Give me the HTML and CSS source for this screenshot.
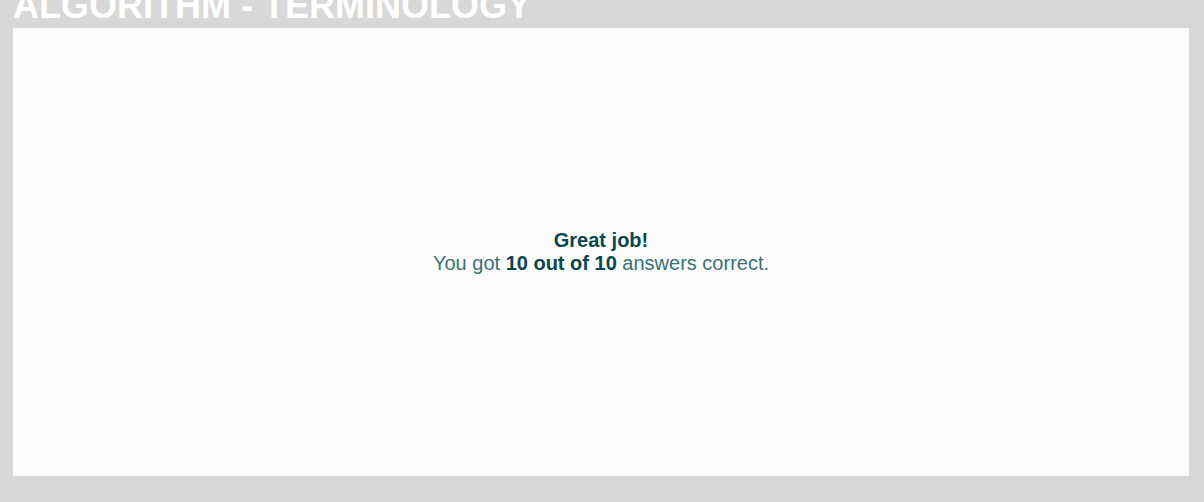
FILE: index.html
```html
<!DOCTYPE html>
<html>
<head>
<meta charset="utf-8">
<link rel="stylesheet" href="styles.css">
</head>
<body>
<div class="page">
  <h1 class="title">ALGORITHM - TERMINOLOGY</h1>
  <div class="panel">
    <div class="result">
      <div class="result-head">Great job!</div>
      <div class="result-text">You got <strong>10 out of 10</strong> answers correct.</div>
    </div>
  </div>
</div>
</body>
</html>
```

FILE: styles.css
```css
html, body {
  margin: 0;
  padding: 0;
  background: #d8d8d8;
  height: 100%;
  overflow: hidden;
}
.page {
  padding: 0 15px 0 13px;
  font-family: "Liberation Sans", Arial, sans-serif;
}
.title {
  margin: -12px 0 4px 0;
  font-size: 36px;
  line-height: 36px;
  font-weight: bold;
  color: #ffffff;
  white-space: nowrap;
}
.panel {
  height: 448px;
  background: #fbfbfb;
  display: flex;
  align-items: center;
  justify-content: center;
}
.result {
  text-align: center;
  font-size: 20px;
  line-height: 23px;
}
.result-head {
  font-weight: bold;
  color: #0a474b;
}
.result-text {
  color: #3a7272;
}
.result-text strong {
  color: #0a474b;
}
```
